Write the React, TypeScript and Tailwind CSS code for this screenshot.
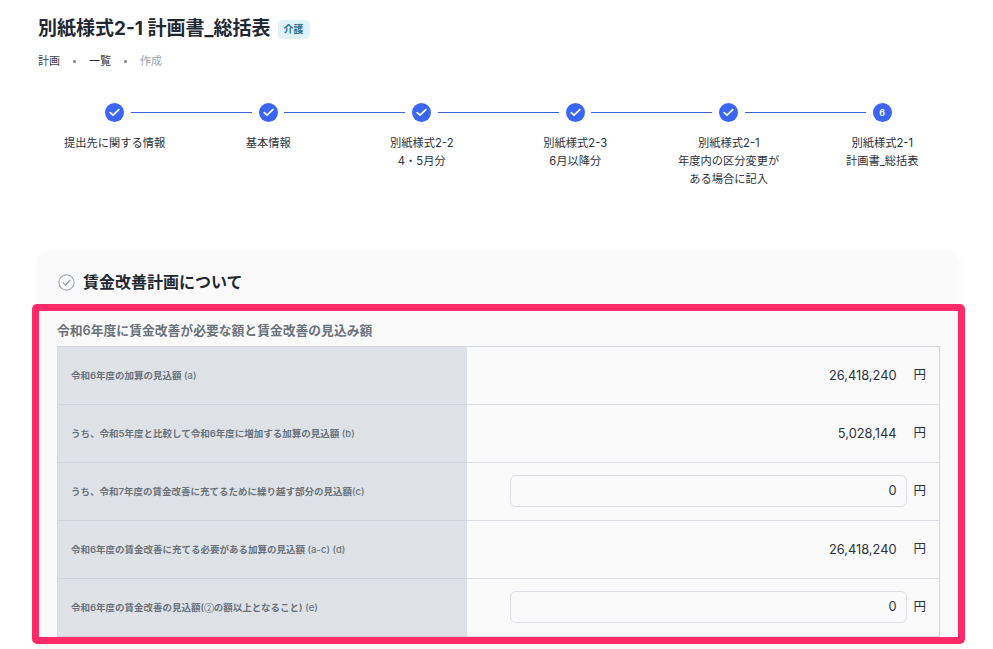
import React from "react";

const FONT = "font-['Inter','Noto_Sans_CJK_JP',sans-serif]";

const steps = [
  { lines: ["提出先に関する情報"], done: true },
  { lines: ["基本情報"], done: true },
  { lines: ["別紙様式2-2", "4・5月分"], done: true },
  { lines: ["別紙様式2-3", "6月以降分"], done: true },
  { lines: ["別紙様式2-1", "年度内の区分変更が", "ある場合に記入"], done: true },
  { lines: ["別紙様式2-1", "計画書_総括表"], done: false },
];

const rows = [
  { label: <>令和6年度の加算の見込額</>, suffix: " (a)", value: "26,418,240", input: false },
  { label: <>うち、令和5年度と比較して令和6年度に増加する加算の見込額</>, suffix: " (b)", value: "5,028,144", input: false },
  { label: <>うち、令和7年度の賃金改善に充てるために繰り越す部分の見込額</>, suffix: "(c)", value: "0", input: true },
  { label: <>令和6年度の賃金改善に充てる必要がある加算の見込額</>, suffix: " (a-c) (d)", value: "26,418,240", input: false },
  {
    label: (
      <>
        令和6年度の賃金改善の見込額(<span className="text-[7px] font-normal">②</span>の額以上となること)
      </>
    ),
    suffix: " (e)",
    value: "0",
    input: true,
  },
];

function Step({ lines, done, index, last }: { lines: string[]; done: boolean; index: number; last: boolean }) {
  return (
    <div className="relative flex flex-col items-center">
      {!last && <div className="absolute left-[calc(50%+16px)] top-[8.5px] h-px w-[121px] bg-[#3d62d4]" />}
      <div className="flex h-[19px] w-[19px] items-center justify-center rounded-full bg-[#3b66f5]">
        {done ? (
          <svg width="11" height="9" viewBox="0 0 11 9" fill="none">
            <path d="M1.2 4.6 L4 7.2 L9.8 1.6" stroke="#fff" strokeWidth="1.7" strokeLinecap="round" strokeLinejoin="round" />
          </svg>
        ) : (
          <span className="text-[9px] font-semibold leading-none text-white">{index + 1}</span>
        )}
      </div>
      <div className="mt-[12px] text-center text-[11.25px] leading-[18px] text-[#2b323b]">
        {lines.map((l) => (
          <div key={l}>{l}</div>
        ))}
      </div>
    </div>
  );
}

function Row({ label, suffix, value, input }: (typeof rows)[number]) {
  return (
    <div className="flex h-[58px]">
      <div className="flex w-[409px] shrink-0 items-center border-b border-[#cfd4db] bg-[#dee1e5] pl-[13px] pt-[1px] text-[9.5px] font-semibold text-[#6a727c]">
        <span>
          {label}
          <span className="font-medium">{suffix}</span>
        </span>
      </div>
      <div className="flex flex-1 items-center justify-end border-b border-[#dcdfe6] pr-[13px] text-[12.8px] text-[#2b323b]">
        {input ? (
          <div className="mb-[1px] mr-[6px] flex h-[32px] w-[397px] items-center justify-end rounded-[6px] border border-[#dcdfe6] pr-[10px]">
            {value}
          </div>
        ) : (
          <span className="mr-[17px]">{value}</span>
        )}
        <span className="text-[12.5px]">円</span>
      </div>
    </div>
  );
}

export default function App() {
  return (
    <div className={`relative h-[649px] w-[993px] overflow-hidden bg-white ${FONT}`}>
      <div className="pl-[38px] pr-[34px]">
        <div className="flex items-center pt-[17px]">
          <h1 className="text-[19px] font-bold leading-[24px] text-[#222831]">別紙様式2-1 計画書_総括表</h1>
          <span className="ml-[7px] flex h-[19px] w-[32px] items-center justify-center rounded-[5px] bg-[#dff2fa] text-[10px] font-semibold text-[#29708f]">
            介護
          </span>
        </div>
        <div className="mt-[11px] flex h-[18px] items-center text-[11px]">
          <span className="text-[#3c434c]">計画</span>
          <span className="mx-[13px] h-[3px] w-[3px] rounded-[1px] bg-[#8b929c]" />
          <span className="text-[#2b323b]">一覧</span>
          <span className="mx-[13px] h-[3px] w-[3px] rounded-[1px] bg-[#8b929c]" />
          <span className="text-[#9aa1ab]">作成</span>
        </div>
        <div className="mt-[33px] grid h-[150px] grid-cols-6">
          {steps.map((s, i) => (
            <Step key={i} lines={s.lines} done={s.done} index={i} last={i === steps.length - 1} />
          ))}
        </div>
        <div className="-mt-[2px] h-[420px] w-[922px] -translate-x-px rounded-t-[14px] bg-[#fafafa] pl-[20px] pr-[19px] shadow-[0_0_6px_rgba(0,0,0,0.03)]">
          <div className="ml-[1px] flex items-center pt-[21px]">
            <svg width="17" height="17" viewBox="0 0 17 17" fill="none">
              <circle cx="8.5" cy="8.5" r="7.6" stroke="#a9b0b8" strokeWidth="1.3" />
              <path d="M5 8.7 L7.6 11.1 L12 6.1" stroke="#8f969f" strokeWidth="1.1" strokeLinecap="round" strokeLinejoin="round" />
            </svg>
            <h2 className="ml-[8px] text-[16px] font-bold leading-[20px] text-[#222831]">賃金改善計画について</h2>
          </div>
          <h3 className="mt-[30px] text-[12.8px] font-semibold leading-[18px] text-[#6a727c]">
            令和6年度に賃金改善が必要な額と賃金改善の見込み額
          </h3>
          <div className="mt-[6px] border border-b-0 border-[#d3d7dd]">
            {rows.map((r, i) => (
              <Row key={i} {...r} />
            ))}
          </div>
        </div>
      </div>
      <div className="absolute left-[32px] top-[304px] h-[340px] w-[933px] rounded-[5px] border-[7px] border-[#ff2a68]" />
    </div>
  );
}
